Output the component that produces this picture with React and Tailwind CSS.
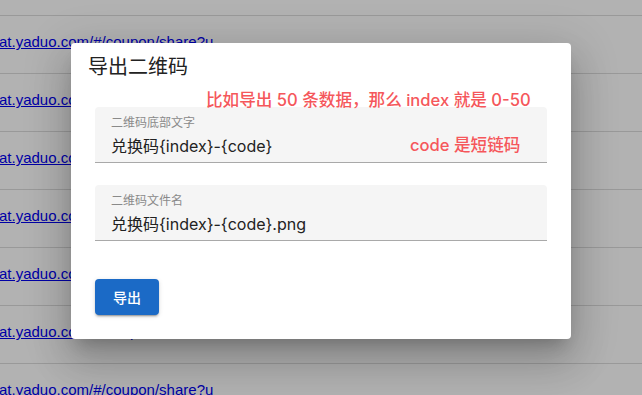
import React from 'react';

const rows = Array.from({ length: 8 });

function FilledField({ label, value }) {
  return (
    <div className="bg-[#f5f5f5] rounded-t-[4px] border-b border-[#a9a9a9] h-[56px] px-4 pt-[8px]">
      <div className="text-[12px] leading-[16px] text-[#8a8a8a]">{label}</div>
      <div className="text-[16px] leading-[22px] text-[#222] mt-[4px]">{value}</div>
    </div>
  );
}

export default function App() {
  return (
    <div
      className="relative w-[642px] h-[395px] overflow-hidden bg-white"
      style={{ fontFamily: 'Inter, "Noto Sans CJK SC", sans-serif' }}
    >
      {/* page behind the dialog */}
      <div className="flex flex-col -mt-[42px]">
        {rows.map((_, i) => (
          <div key={i} className="h-[58px] border-b border-[#dcdcdc] flex items-center pb-[4px] shrink-0">
            <a
              href="#"
              className="text-[15px] text-[#0000ee] underline -ml-px whitespace-nowrap"
              style={{ fontFamily: '"Liberation Sans", Arial, sans-serif' }}
            >
              at.yaduo.com/#/coupon/share?u
            </a>
          </div>
        ))}
      </div>

      {/* backdrop */}
      <div className="absolute inset-0 bg-black/30" />

      {/* dialog */}
      <div className="absolute left-[71px] top-[43px] w-[500px] h-[296px] bg-white rounded-[4px] shadow-[0_11px_15px_-7px_rgba(0,0,0,0.2),0_24px_38px_3px_rgba(0,0,0,0.14),0_9px_46px_8px_rgba(0,0,0,0.12)] flex flex-col">
        <h2 className="pl-[17px] pt-[11px] text-[20px] leading-[26px] font-normal text-[#222]">导出二维码</h2>

        <div className="px-6 pt-[27px] flex flex-col gap-[22px]">
          <FilledField label="二维码底部文字" value="兑换码{index}-{code}" />
          <FilledField label="二维码文件名" value="兑换码{index}-{code}.png" />
        </div>

        <div className="px-6 pt-[38px]">
          <button className="w-[64px] h-[36px] rounded-[4px] bg-[#1b6ac6] text-white text-[14px] font-medium shadow-[0_3px_1px_-2px_rgba(0,0,0,0.2),0_2px_2px_0_rgba(0,0,0,0.14),0_1px_5px_0_rgba(0,0,0,0.12)]">
            导出
          </button>
        </div>

        {/* annotations */}
        <div className="absolute left-[135px] top-[47px] text-[16.6px] leading-[20px] font-medium text-[#f5575b] whitespace-nowrap">
          比如导出 50 条数据，那么 index 就是 0-50
        </div>
        <div className="absolute left-[339px] top-[92px] text-[16.6px] leading-[20px] font-medium text-[#f5575b] whitespace-nowrap">
          code 是短链码
        </div>
      </div>
    </div>
  );
}
